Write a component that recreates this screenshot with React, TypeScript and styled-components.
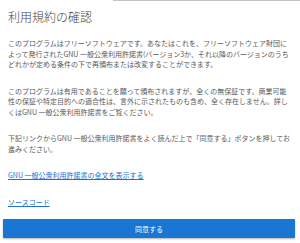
import styled, { createGlobalStyle } from 'styled-components'

const GlobalStyle = createGlobalStyle`
  html, body {
    margin: 0;
    padding: 0;
    background: #ffffff;
  }
  body {
    font-family: "Noto Sans CJK JP", "Noto Sans", sans-serif;
  }
`

const App = () => {
  return (
    <Page>
      <GlobalStyle />
      <TopEdge>
        <EdgeLine />
      </TopEdge>
      <Content>
        <Title>利用規約の確認</Title>
        <Paragraph>
          このプログラムはフリーソフトウェアです。あなたはこれを、フリーソフトウェア財団によって発行されたGNU 一般公衆利用許諾書(バージョン3か、それ以降のバージョンのうちどれかが定める条件の下で再頒布または改変することができます。
        </Paragraph>
        <Paragraph>
          このプログラムは有用であることを願って頒布されますが、全くの無保証です。商業可能性の保証や特定目的への適合性は、言外に示されたものも含め、全く存在しません。詳しくはGNU 一般公衆利用許諾書をご覧ください。
        </Paragraph>
        <Paragraph>
          下記リンクからGNU 一般公衆利用許諾書をよく読んだ上で「同意する」ボタンを押してお進みください。
        </Paragraph>
        <TextLink href='#'>GNU 一般公衆利用許諾書の全文を表示する</TextLink>
        <TextLink href='#'>ソースコード</TextLink>
      </Content>
      <AgreeButton>同意する</AgreeButton>
    </Page>
  )
}

export default App

const Page = styled.div`
  width: 300px;
  height: 243px;
  display: flex;
  flex-direction: column;
  overflow: hidden;
`

const TopEdge = styled.div`
  display: flex;
  justify-content: flex-end;
  height: 1px;
`

const EdgeLine = styled.div`
  width: 187px;
  background: #c4c4c4;
`

const Content = styled.div`
  display: flex;
  flex-direction: column;
  align-items: flex-start;
  gap: 16px;
  padding: 8px 8px 0 8px;
`

const Title = styled.h1`
  margin: 0 0 -3px 0;
  font-size: 12px;
  line-height: 16px;
  font-weight: 300;
  color: #444444;
`

const Paragraph = styled.p`
  margin: 0;
  font-size: 7px;
  line-height: 10.5px;
  color: #5a5a5a;
`

const TextLink = styled.a`
  font-size: 7px;
  line-height: 10.5px;
  color: #1a73d1;
  text-decoration: underline;
`

const AgreeButton = styled.button`
  margin: 12px 5px 0 3px;
  height: 19px;
  border: none;
  border-radius: 1px;
  background: #1976d2;
  color: #ffffff;
  font-family: "Noto Sans CJK JP", "Noto Sans", sans-serif;
  font-size: 7px;
  box-shadow: 0 1px 2px rgba(0, 0, 0, 0.3);
  cursor: pointer;
`
